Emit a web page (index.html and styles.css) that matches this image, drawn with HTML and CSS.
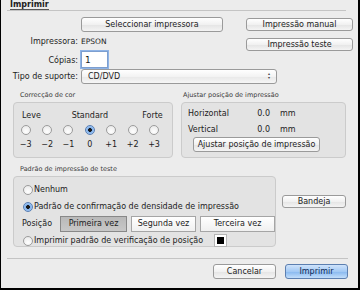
FILE: index.html
```html
<!DOCTYPE html>
<html lang="pt">
<head>
  <meta charset="UTF-8">
  <meta name="viewport" content="width=device-width, initial-scale=1.0">
  <title>Imprimir</title>
  <link rel="stylesheet" href="styles.css">
</head>
<body>
  <div class="window">
    <div class="titlebar"><span class="title">Imprimir</span></div>

    <div class="top">
      <span></span>
      <button type="button" class="btn btn-select">Seleccionar impressora</button>
      <button type="button" class="btn btn-side">Impressão manual</button>

      <span class="lbl">Impressora:</span>
      <span class="value">EPSON</span>
      <button type="button" class="btn btn-side btn-low">Impressão teste</button>

      <span class="lbl">Cópias:</span>
      <input class="copies" type="text" value="1">
      <span></span>

      <span class="lbl">Tipo de suporte:</span>
      <div class="select">CD/DVD<span class="arrows">▴<br>▾</span></div>
    </div>

    <div class="groups">
      <div class="group group-color">
        <div class="caption">Correcção de cor</div>
        <div class="box">
          <div class="scale">
            <span class="lv-leve">Leve</span>
            <span class="lv-std">Standard</span>
            <span class="lv-forte">Forte</span>
            <span class="radio"></span>
            <span class="radio"></span>
            <span class="radio"></span>
            <span class="radio on"></span>
            <span class="radio"></span>
            <span class="radio"></span>
            <span class="radio"></span>
            <span class="num">−3</span>
            <span class="num">−2</span>
            <span class="num">−1</span>
            <span class="num">0</span>
            <span class="num">+1</span>
            <span class="num">+2</span>
            <span class="num">+3</span>
          </div>
        </div>
      </div>

      <div class="group group-pos">
        <div class="caption">Ajustar posição de impressão</div>
        <div class="box">
          <div class="offsets">
            <span>Horizontal</span><span class="val">0.0</span><span>mm</span>
            <span>Vertical</span><span class="val">0.0</span><span>mm</span>
          </div>
          <button type="button" class="btn btn-adjust">Ajustar posição de impressão</button>
        </div>
      </div>
    </div>

    <div class="pattern-area">
      <div class="group group-pattern">
        <div class="caption">Padrão de impressão de teste</div>
        <div class="box">
          <div class="opt"><span class="radio"></span>Nenhum</div>
          <div class="opt"><span class="radio on"></span>Padrão de confirmação de densidade de impressão</div>
          <div class="position">
            <span class="pos-lbl">Posição</span>
            <span class="seg active">Primeira vez</span>
            <span class="seg">Segunda vez</span>
            <span class="seg">Terceira vez</span>
          </div>
          <div class="opt"><span class="radio"></span>Imprimir padrão de verificação de posição<span class="swatch"></span></div>
        </div>
      </div>
      <button type="button" class="btn btn-tray">Bandeja</button>
    </div>

    <div class="footer">
      <button type="button" class="btn btn-foot">Cancelar</button>
      <button type="button" class="btn btn-foot btn-default">Imprimir</button>
    </div>
  </div>
</body>
</html>
```

FILE: styles.css
```css
/* Base */
* {
  margin: 0;
  padding: 0;
  box-sizing: border-box;
}
body {
  background: #000;
  font-family: 'DejaVu Sans', sans-serif;
  font-size: 8px;
  color: #1c1c1c;
  width: 360px;
  height: 290px;
  overflow: hidden;
}
.window {
  width: 357px;
  height: 288px;
  margin-left: 1px;
  background: #ececec;
  padding: 0 12px 0 6px;
}
/* Title */
.titlebar {
  height: 11px;
  border-bottom: 1px solid #c4c4c4;
  padding-left: 3px;
}
.title {
  display: inline-block;
  height: 10px;
  font-weight: bold;
  font-size: 8px;
  line-height: 9px;
  border-bottom: 1px solid #555;
}
/* Buttons */
.btn {
  font-family: inherit;
  font-size: 8px;
  color: #1c1c1c;
  background: linear-gradient(#ffffff, #f1f1f1 50%, #e4e4e4 51%, #f4f4f4);
  border: 1px solid #9a9a9a;
  border-radius: 3px;
  height: 13px;
  line-height: 11px;
  text-align: center;
}
/* Top form */
.top {
  display: grid;
  grid-template-columns: 71px 162px 107px;
  grid-template-rows: 15px 19px 18px 15px;
  column-gap: 3px;
  align-items: center;
  margin-top: 6px;
}
.lbl {
  text-align: right;
}
.btn-select {
  width: 142px;
  height: 15px;
}
.btn-low {
  align-self: end;
}
.value {
  font-size: 7.5px;
}
.copies {
  width: 27px;
  height: 17px;
  border: 1px solid #7d9fd0;
  box-shadow: 0 0 0 1px #8fb4e6;
  font-family: inherit;
  font-size: 9px;
  padding: 1px 3px;
  color: #1c1c1c;
  align-self: start;
}
.select {
  grid-column: 2 / 4;
  width: 196px;
  height: 15px;
  background: linear-gradient(#ffffff, #f3f3f3 50%, #e8e8e8 51%, #f6f6f6);
  border: 1px solid #9a9a9a;
  border-radius: 3px;
  padding-left: 6px;
  line-height: 13px;
  display: flex;
  justify-content: space-between;
}
.arrows {
  font-size: 4px;
  line-height: 4px;
  padding: 2px 6px 0 0;
  color: #444;
}
/* Group boxes */
.caption {
  font-size: 6.5px;
  color: #3a3a3a;
  height: 11px;
  padding-left: 7px;
  line-height: 9px;
}
.box {
  background: #e3e3e3;
  border: 1px solid #cbcbcb;
  border-radius: 4px;
}
.groups {
  display: flex;
  gap: 8px;
  margin-top: 7px;
  padding-left: 6px;
}
.group-color .box {
  width: 160px;
  height: 56px;
  padding: 6px 0 0 1px;
}
.scale {
  display: grid;
  grid-template-columns: repeat(7, 21.4px);
  grid-template-rows: 12px 17px 12px;
  justify-items: center;
  align-items: center;
}
.lv-leve {
  grid-column: 1 / 3;
  justify-self: start;
  margin-left: 7px;
}
.lv-std {
  grid-column: 3 / 6;
}
.lv-forte {
  grid-column: 6 / 8;
  justify-self: end;
  margin-right: 2px;
}
.radio {
  display: inline-block;
  width: 10px;
  height: 10px;
  border-radius: 50%;
  border: 1px solid #9c9c9c;
  background: radial-gradient(circle at 50% 70%, #ffffff, #e6e6e6);
  flex-shrink: 0;
}
.radio.on {
  border-color: #5a7fb3;
  background: radial-gradient(circle, #1a1a1a 0 1.6px, #7fb0ec 2.2px, #bcd8f6);
}
.num {
  font-size: 8px;
}
.group-pos .box {
  width: 165px;
  height: 56px;
  padding: 2px 0 0 5px;
}
.group-pos .caption {
  padding-left: 2px;
}
.offsets {
  display: grid;
  grid-template-columns: 63px 19px 32px;
  grid-template-rows: 16px 16px;
  align-items: center;
  padding-left: 1px;
}
.offsets .val {
  text-align: right;
}
.offsets span:nth-child(3n) {
  padding-left: 10px;
}
.btn-adjust {
  width: 127px;
  height: 15px;
  margin: 0 0 0 6px;
}
/* Pattern group */
.pattern-area {
  display: flex;
  align-items: flex-start;
  gap: 6px;
  margin-top: 7px;
  padding-left: 6px;
}
.group-pattern .box {
  width: 263px;
  height: 71px;
  padding: 4px 0 0 9px;
}
.opt {
  display: flex;
  align-items: center;
  gap: 1px;
  height: 17px;
  font-size: 8px;
}
.position {
  display: flex;
  align-items: center;
  height: 17px;
  margin-left: -1px;
  gap: 4px;
}
.pos-lbl {
  width: 34px;
}
.seg {
  height: 16px;
  line-height: 14px;
  text-align: center;
  border: 1px solid #a5a5a5;
  background: linear-gradient(#ffffff, #f0f0f0);
  width: 65px;
}
.seg.active {
  background: linear-gradient(#b9b9b9, #c8c8c8);
  border-color: #888;
  width: 67px;
}
.seg:last-child {
  width: 75px;
}
.swatch {
  width: 13px;
  height: 13px;
  margin-left: 10px;
  border: 1px solid #b5b5b5;
  background: #fff;
  box-shadow: inset 0 0 0 2px #fff, inset 0 0 0 10px #000;
}
.btn-tray {
  width: 66px;
  margin-top: 30px;
}
/* Footer */
.footer {
  margin-top: 11px;
  border-top: 1px solid #c4c4c4;
  display: flex;
  justify-content: flex-end;
  gap: 9px;
  padding-top: 5px;
  margin-right: -2px;
}
.btn-foot {
  width: 63px;
  height: 15px;
}
.btn-default {
  background: linear-gradient(#cfe3fb, #a3c9f4 50%, #86b7ef 51%, #c3defa);
  border-color: #5c7fb0;
  color: #0d2a55;
}
```
